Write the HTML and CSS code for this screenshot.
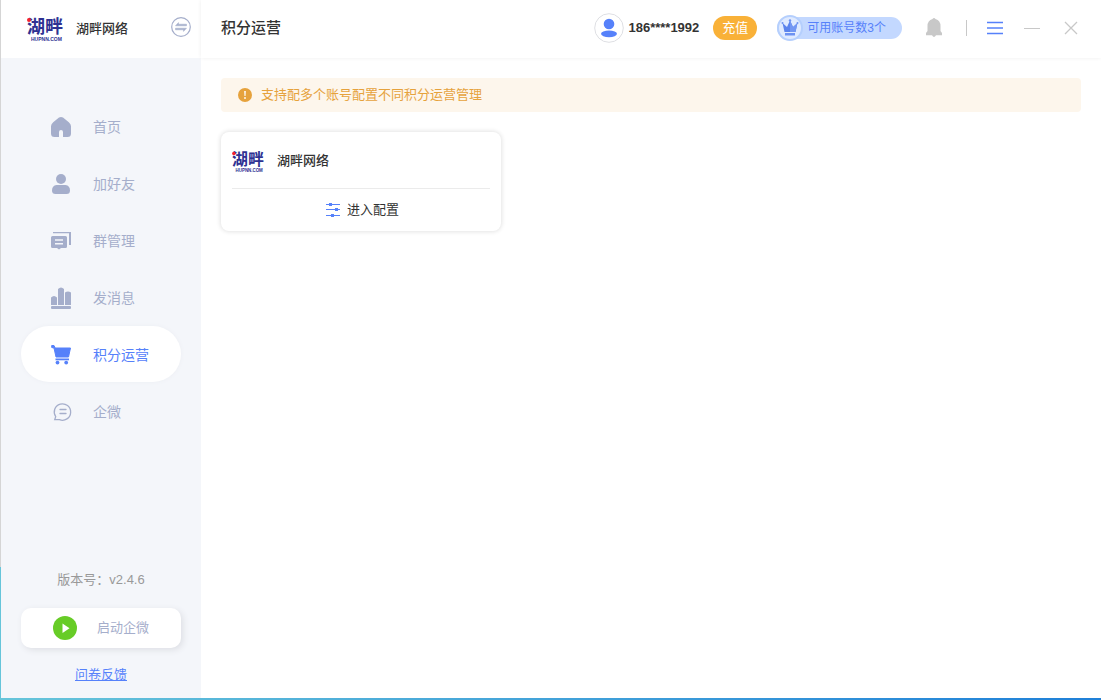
FILE: index.html
```html
<!DOCTYPE html>
<html lang="zh-CN">
<head>
<meta charset="utf-8">
<meta name="viewport" content="width=device-width, initial-scale=1">
<title>积分运营</title>
<link rel="stylesheet" href="styles.css">
</head>
<body>
<div class="window">
  <aside class="sidebar">
    <div class="brand">
      <svg class="brand-logo" viewBox="0 0 36 26" role="img" aria-label="湖畔">
        <text class="logo-name" x="0" y="17">湖畔</text>
        <text class="logo-site" x="4" y="25">HUPNN.COM</text>
        <circle cx="2" cy="4" r="2" fill="#f5222d"/>
      </svg>
      <span class="brand-name">湖畔网络</span>
      <button class="icon-button switch" type="button" aria-label="切换">
        <svg width="20" height="20" viewBox="0 0 20 20">
          <circle cx="10" cy="10" r="9.3" fill="none" stroke="#a5aecb" stroke-width="1.2"/>
          <path d="M4.5 8.800 7.500 5.600v1.600h8v1.600zM15.500 11.200 12.500 14.400v-1.600h-8v-1.600z" fill="#a5aecb" stroke="#a5aecb" stroke-width=".5"/>
        </svg>
      </button>
    </div>
    <nav class="nav">
      <a class="nav-item" href="#home">
        <svg class="nav-icon" viewBox="0 0 22 22"><path d="M8 1.600q2-1.300 4 0l5.800 4.600Q20 8 20 10.300v7.200q0 3.500-3.500 3.500H12v-5a2 2 0 0 0-4 0v5H3.500Q0 21 0 17.500v-7.200Q0 8 2.200 6.200z"/></svg>
        <span>首页</span>
      </a>
      <a class="nav-item" href="#friends">
        <svg class="nav-icon" viewBox="0 0 22 22"><circle cx="10" cy="6" r="5"/><path d="M5.500 12h9Q19 12.500 19 17.500q0 3.500-3.500 3.500h-11Q1 21 1 17.500 1 12.500 5.500 12z"/></svg>
        <span>加好友</span>
      </a>
      <a class="nav-item" href="#groups">
        <svg class="nav-icon" viewBox="0 0 22 22"><path d="M2 2h18v13h-2V3.300H2z"/><path fill-rule="evenodd" d="M1.500 6h13Q16 6 16 7.500v9q0 1.500-1.500 1.500H10l-2 1.500L6 18H1.500Q0 18 0 16.500v-9Q0 6 1.500 6zM4 9.200v1.500h8V9.200zM4 13v1.500h8V13z"/></svg>
        <span>群管理</span>
      </a>
      <a class="nav-item" href="#messages">
        <svg class="nav-icon" viewBox="0 0 22 22"><path d="M0 10.500Q3 7.500 6 10.500V18H0zM7 2Q10-1 13 2v16H7zM14 5.500Q17 3.500 20 5.500V18h-6z"/><rect y="19" width="20" height="3" rx="1"/></svg>
        <span>发消息</span>
      </a>
      <a class="nav-item active" href="#points" aria-current="page">
        <svg class="nav-icon" viewBox="0 0 22 22"><path d="M.7 1.500H3L4.200 4h15.300L17.500 13H5L3 4 .7 3.500z" stroke="#5681fa" stroke-linejoin="round"/><path d="M4.500 14.500H18v1.800H4.500z"/><circle cx="6.500" cy="18.600" r="1.900"/><circle cx="15.200" cy="18.600" r="1.900"/></svg>
        <span>积分运营</span>
      </a>
      <a class="nav-item" href="#wecom">
        <svg class="nav-icon" viewBox="0 0 22 22"><path d="M3.700 18.700l1-3A8.200 8.200 0 1 1 8.500 18.700zM9 8.500h6M9 12.500h6" fill="none" stroke="#a5aecb" stroke-width="1.300" stroke-linecap="round"/></svg>
        <span>企微</span>
      </a>
    </nav>
    <div class="side-foot">
      <p class="version">版本号<span class="colon">：</span>v2.4.6</p>
      <button class="launch" type="button">
        <svg width="24" height="24" viewBox="0 0 24 24"><circle cx="12" cy="12" r="12" fill="#67cc27"/><path d="M9.500 7.500v9.500l7-4.700z" fill="#fff"/></svg>
        <span>启动企微</span>
      </button>
      <a class="feedback" href="#feedback">问卷反馈</a>
    </div>
  </aside>

  <div class="workspace">
    <header class="topbar">
      <h1 class="title">积分运营</h1>
      <div class="account">
        <svg width="30" height="30" viewBox="0 0 30 30"><circle cx="15" cy="15" r="14.300" fill="#fff" stroke="#dedfe3"/><circle cx="15" cy="11" r="5.300" fill="#5681fa"/><ellipse cx="15" cy="20.800" rx="8" ry="3.400" fill="#5681fa"/></svg>
        <span class="phone">186****1992</span>
      </div>
      <button class="recharge" type="button">充值</button>
      <div class="quota">
        <svg width="26" height="26" viewBox="0 0 26 26"><circle cx="13" cy="13" r="12" fill="#dfeaff" stroke="#b5cffd" stroke-width="2"/><path d="m5.500 8 4.500 4L13 5.500l3 6.500 4.500-4-2 9h-11z" fill="#5b83ed"/><path d="M13 5.500 16 12l4.500-4-2 9H13z" fill="#7397f3"/><circle cx="5.500" cy="8" r="1" fill="#6d92f2"/><circle cx="13" cy="5.500" r="1.200" fill="#6d92f2"/><circle cx="20.500" cy="8" r="1" fill="#6d92f2"/><path d="M8 18h10v2.500H8z" fill="#6d92f2"/></svg>
        <span>可用账号数3个</span>
      </div>
      <button class="icon-button bell" type="button" aria-label="通知">
        <svg width="18" height="20" viewBox="0 0 18 20"><path d="M7.500 1Q9-.8 10.500 1 15.500 2.500 15.500 8v5l1.500 2v2.200H11q-2 3.500-4 0H1V15l1.500-2V8Q2.500 2.500 7.500 1z" fill="#c8c8c8"/></svg>
      </button>
      <span class="divider"></span>
      <div class="controls">
        <button class="icon-button" type="button" aria-label="菜单"><svg width="16" height="14" viewBox="0 0 16 14"><path d="M0 1.500h16M0 7h16M0 12.500h16" stroke="#5681fa" stroke-width="1.600"/></svg></button>
        <button class="icon-button" type="button" aria-label="最小化"><svg width="16" height="14" viewBox="0 0 16 14"><path d="M0 7.500h16" stroke="#c8c8c8"/></svg></button>
        <button class="icon-button close" type="button" aria-label="关闭"><svg width="14" height="14" viewBox="0 0 14 14"><path d="m1 1 12 12M13 1 1 13" stroke="#c8c8c8" stroke-width="1.300"/></svg></button>
      </div>
    </header>
    <main class="content">
      <div class="notice" role="note">
        <svg width="14" height="14" viewBox="0 0 14 14"><circle cx="7" cy="7" r="7" fill="#e6a23c"/><path d="M6.200 3h1.600l-.3 5h-1z" fill="#fff"/><circle cx="7" cy="10" r=".9" fill="#fff"/></svg>
        <span>支持配多个账号配置不同积分运营管理</span>
      </div>
      <section class="card">
        <div class="card-head">
          <svg class="card-logo" viewBox="0 0 36 26" role="img" aria-label="湖畔">
            <text class="logo-name" x="0" y="17">湖畔</text>
            <text class="logo-site" x="4" y="25">HUPNN.COM</text>
            <circle cx="2" cy="4" r="2" fill="#f5222d"/>
          </svg>
          <h2 class="card-title">湖畔网络</h2>
        </div>
        <button class="configure" type="button">
          <svg width="14" height="14" viewBox="0 0 14 14"><path d="M0 1.500h14M0 6.500h14M0 12.500h14" stroke="#5681fa"/><path d="M3 0h3v3H3zM9 5h3v3H9zM5 11h3v3H5z" fill="#5681fa"/></svg>
          <span>进入配置</span>
        </button>
      </section>
    </main>
  </div>
</div>
</body>
</html>
```
FILE: styles.css
```css
* {
  box-sizing: border-box;
}

body {
  margin: 0;
  font-family: "Liberation Sans", "Noto Sans CJK SC", sans-serif;
  font-size: 13px;
  line-height: 20px;
  color: #333;
}

button {
  font: inherit;
  color: inherit;
  border: 0;
  padding: 0;
  background: none;
  cursor: pointer;
}

svg {
  display: block;
  flex: none;
}

h1,
h2,
p {
  margin: 0;
}

.window {
  display: flex;
  min-height: 100vh;
  padding: 0 0 2px 1px;
  background:
    linear-gradient(90deg, #66c5da, #1f80d8) bottom / 100% 2px no-repeat,
    linear-gradient(#d5d5d5 81%, #66c5da 81%) left / 1px 100% no-repeat;
}

.sidebar {
  display: flex;
  flex-direction: column;
  width: 200px;
  flex: none;
  background: #f4f6fa;
}

.brand {
  display: flex;
  align-items: center;
  height: 58px;
  padding: 0 10px 0 26px;
  background: #fff;
}

.brand-logo {
  width: 36px;
  height: 26px;
}

.card-logo {
  width: 32px;
  height: 23px;
}

.brand-logo,
.card-logo {
  overflow: visible;
}

.logo-name {
  font: bold 18px "Liberation Sans", "Noto Sans CJK SC", sans-serif;
  fill: #2e3192;
}

.logo-site {
  font: bold 5px "Liberation Sans", sans-serif;
  fill: #2e3192;
}

.brand-name {
  margin-left: 13px;
  font-weight: 500;
}

.icon-button {
  display: flex;
  align-items: center;
  justify-content: center;
}

.switch {
  margin: 0 0 4px auto;
}

.nav {
  display: flex;
  flex-direction: column;
  gap: 1px;
  padding: 40px 20px 0;
}

.nav-item {
  display: flex;
  align-items: center;
  gap: 20px;
  height: 56px;
  padding: 2px 30px 0;
  border-radius: 28px;
  font-size: 14px;
  color: #a5aecb;
  text-decoration: none;
}

.nav-item.active {
  background: #fff;
  color: #5681fa;
  box-shadow: 0 0 4px #eceef3;
}

.nav-icon {
  width: 22px;
  height: 22px;
  fill: currentColor;
}

.side-foot {
  display: flex;
  flex-direction: column;
  align-items: center;
  margin-top: auto;
  padding: 0 20px 13px;
}

.version {
  color: #999;
}

.colon {
  font-family: "Noto Sans CJK TC", sans-serif;
}

.launch {
  display: flex;
  align-items: center;
  gap: 20px;
  width: 100%;
  height: 40px;
  margin: 18px 0 17px;
  padding: 0 32px;
  border-radius: 10px;
  background: #fff;
  color: #a5aecb;
  box-shadow: 2px 2px 6px #dddfe4;
}

.feedback {
  color: #5681fa;
}

.workspace {
  flex: 1;
  min-width: 0;
  background: #fff;
}

.topbar {
  display: flex;
  align-items: center;
  height: 58px;
  padding: 0 20px 2px;
  box-shadow: 0 0 4px #eee;
}

.title {
  margin-right: auto;
  font-size: 15px;
  font-weight: 500;
}

.account {
  display: flex;
  align-items: center;
  gap: 4px;
}

.phone {
  font-weight: bold;
}

.recharge {
  width: 44px;
  height: 24px;
  margin: 0 20px 0 14px;
  border-radius: 12px;
  background: #f9b138;
  color: #fff;
}

.quota {
  display: flex;
  align-items: center;
  gap: 4px;
  height: 22px;
  padding-right: 16px;
  border-radius: 13px;
  background: #c3d8ff;
  color: #5681fa;
  font-size: 12px;
}

.bell {
  margin: 0 23px;
}

.divider {
  width: 1px;
  height: 16px;
  background: #c8c8c8;
}

.controls {
  display: flex;
  gap: 21px;
  margin-left: 20px;
}

.close {
  width: 20px;
}

.content {
  padding: 20px;
}

.notice {
  display: flex;
  align-items: center;
  gap: 9px;
  min-height: 34px;
  padding: 0 17px;
  border-radius: 4px;
  background: #fdf6ec;
  color: #e6a23c;
}

.card {
  width: 280px;
  margin-top: 20px;
  padding: 0 11px;
  border-radius: 8px;
  background: #fff;
  box-shadow: 0 0 4px 1px #e4e4e4;
}

.card-head {
  display: flex;
  align-items: center;
  gap: 13px;
  height: 57px;
  padding-top: 2px;
  border-bottom: 1px solid #ebebeb;
}

.card-title {
  font-size: 13px;
  font-weight: 500;
}

.configure {
  display: flex;
  align-items: center;
  justify-content: center;
  gap: 7px;
  width: 100%;
  height: 42px;
  padding-left: 3px;
}
```
